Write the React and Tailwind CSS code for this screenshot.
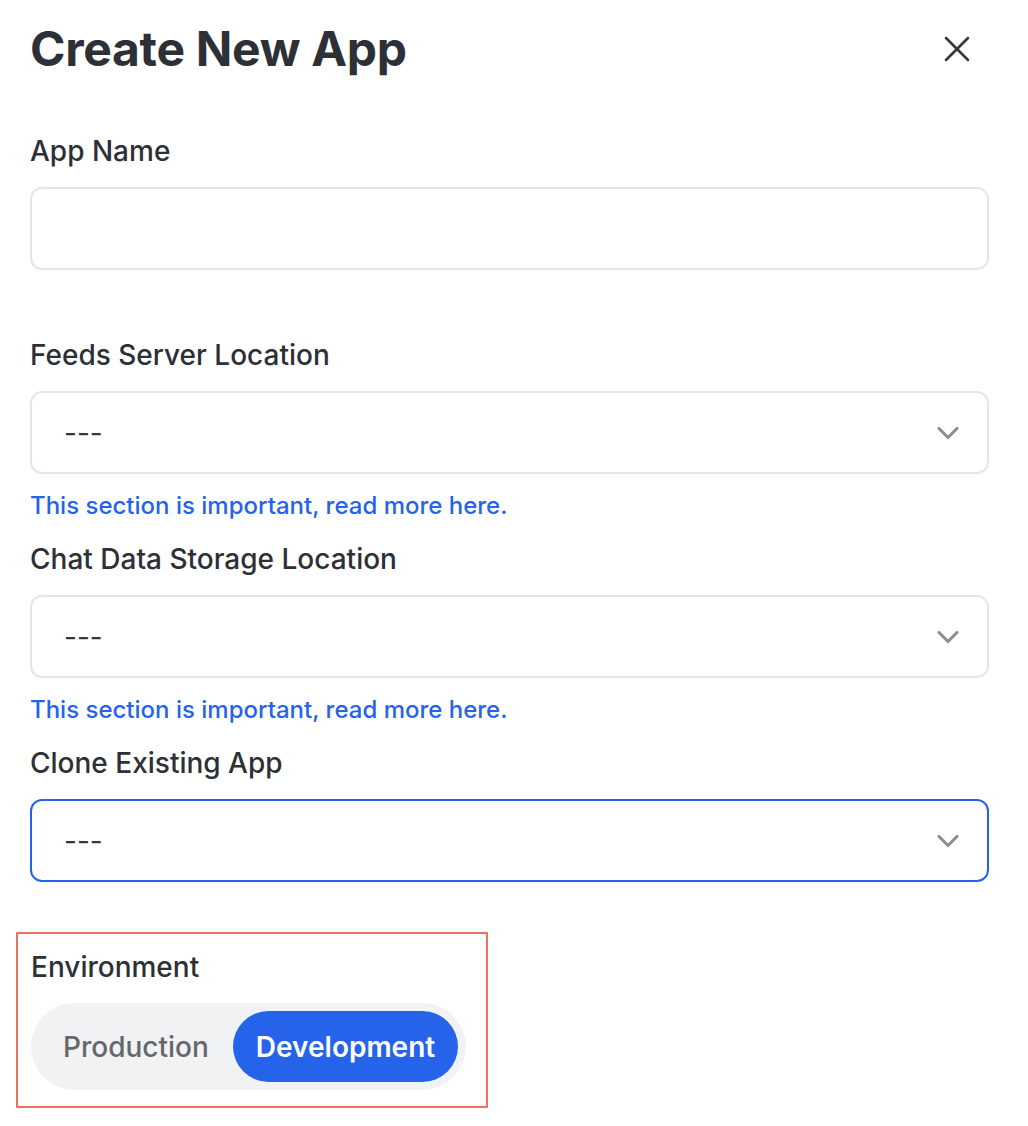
import React, { useState } from "react";

const font = { fontFamily: "Inter, 'Noto Sans', sans-serif" };

const Chevron = () => (
  <svg width="36" height="36" viewBox="0 0 24 24" fill="none" stroke="#8b8e94" strokeWidth="2.1" strokeLinecap="round" strokeLinejoin="round">
    <path d="m6 9 6 6 6-6" />
  </svg>
);

function Field({ label, helper, children, last }) {
  return (
    <div className={last ? "mb-[50px]" : "mb-[22px]"}>
      <div className="text-[28px] leading-[32px] font-medium text-[#2d3036]">{label}</div>
      <div className="mt-[20px]">{children}</div>
      {!last && (
        <div className="mt-[17px] h-[30px] text-[24px] leading-[30px] font-medium text-[#2463eb]">
          {helper}
        </div>
      )}
    </div>
  );
}

function Select({ active }) {
  return (
    <div
      className={`h-[83px] rounded-[12px] border-2 flex items-center justify-between pl-[32px] pr-[21px] ${
        active ? "border-[#2563eb]" : "border-[#e6e6e8]"
      }`}
    >
      <span className="text-[28px] text-[#35383d]">---</span>
      <Chevron />
    </div>
  );
}

export default function App() {
  const [env, setEnv] = useState("Development");

  return (
    <div className="min-h-screen bg-white pt-[20px] pl-[30px] pr-[39px]" style={font}>
      <div className="flex items-center justify-between h-[58px]">
        <h1 className="text-[48px] leading-[58px] font-bold text-[#2d3036] tracking-[-0.3px]">Create New App</h1>
        <button className="w-[64px] h-[58px] flex items-center justify-center">
          <svg width="44" height="44" viewBox="0 0 24 24" fill="none" stroke="#34373c" strokeWidth="1.4" strokeLinecap="round">
            <path d="M18 6 6 18" />
            <path d="m6 6 12 12" />
          </svg>
        </button>
      </div>

      <div className="mt-[57px]">
        <Field label="App Name" helper="">
          <input className="w-full h-[83px] rounded-[12px] border-2 border-[#e6e6e8] px-[32px] text-[28px] outline-none" />
        </Field>
        <Field label="Feeds Server Location" helper="This section is important, read more here.">
          <Select />
        </Field>
        <Field label="Chat Data Storage Location" helper="This section is important, read more here.">
          <Select />
        </Field>
        <Field label="Clone Existing App" last>
          <Select active />
        </Field>

        <div className="w-fit -ml-[14px] border-2 border-[#eb7262] pt-[17px] pb-[16px] pl-[13px] pr-[20px]">
          <div className="text-[28px] leading-[32px] font-medium text-[#2d3036]">Environment</div>
          <div className="mt-[20px] inline-flex h-[87px] p-[8px] rounded-full bg-[#f1f2f4]">
            {["Production", "Development"].map((e) => (
              <button
                key={e}
                onClick={() => setEnv(e)}
                className={`h-[71px] rounded-full text-[28px] ${
                  env === e ? "px-[23px] bg-[#2563eb] text-white font-semibold" : "px-[24px] text-[#65676b] font-medium"
                }`}
              >
                {e}
              </button>
            ))}
          </div>
        </div>
      </div>
    </div>
  );
}
